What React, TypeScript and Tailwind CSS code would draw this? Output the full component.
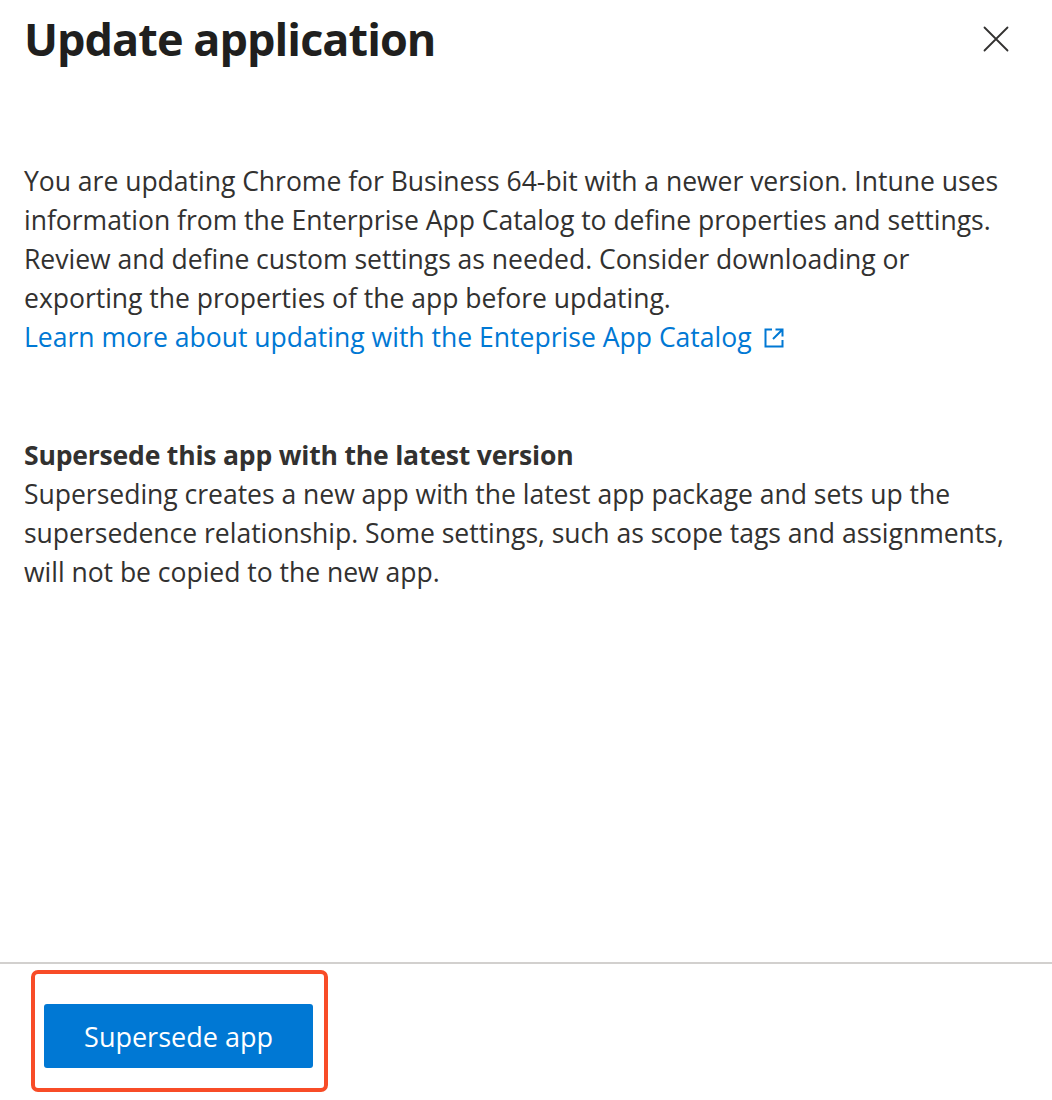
export default function App() {
  return (
    <div className="w-[1052px] h-[1100px] bg-white flex flex-col font-['Open_Sans','Noto_Sans',sans-serif] text-[#323130] overflow-hidden">
      {/* Header */}
      <div className="flex items-start justify-between pl-6 pr-[43px] h-[116px]">
        <h1 className="text-[45px] leading-[78px] font-bold text-[#201f1e] tracking-[-0.95px]">Update application</h1>
        <button className="mt-[26px] text-[#323130]">
          <svg width="26" height="26" viewBox="0 0 26 26" fill="none" stroke="currentColor" strokeWidth="1.8" strokeLinecap="round">
            <path d="M1.5 1.5 L24.5 24.5 M24.5 1.5 L1.5 24.5" />
          </svg>
        </button>
      </div>

      {/* Body */}
      <div className="flex-1 pl-6 pr-[30px] pt-[46px] text-[26.55px] leading-[39px]">
        <p className="tracking-[-0.03px]">
          You are updating Chrome for Business 64-bit with a newer version. Intune uses information from the Enterprise App Catalog to define properties and settings. Review and define custom settings as needed. Consider downloading or exporting the properties of the app before updating.
        </p>
        <a href="#" className="flex items-center gap-3 text-[#0078d4]">
          Learn more about updating with the Enteprise App Catalog
          <svg width="20" height="20" viewBox="0 0 20 20" fill="none" stroke="currentColor" strokeWidth="2">
            <path d="M8 1.5 H1.5 V18.5 H18.5 V12 M11.5 1.5 H18.5 V8.5 M18.5 1.5 L9 11" />
          </svg>
        </a>
        <div className="mt-[79px]">
          <div className="font-bold tracking-[-0.2px]">Supersede this app with the latest version</div>
          <p className="tracking-[-0.03px]">
            Superseding creates a new app with the latest app package and sets up the supersedence relationship. Some settings, such as scope tags and assignments, will not be copied to the new app.
          </p>
        </div>
      </div>

      {/* Footer */}
      <div className="h-[138px] border-t-2 border-[#d2d0ce] pl-[31px] pt-[6px]">
        <div className="w-[297px] h-[122px] border-[4px] border-[#f84c27] rounded-[7px] pl-[9px] pt-[30px]">
          <button className="w-[269px] h-[64px] pt-[3px] bg-[#0078d4] rounded-[3px] text-white text-[27px] font-medium">
            Supersede app
          </button>
        </div>
      </div>
    </div>
  );
}
